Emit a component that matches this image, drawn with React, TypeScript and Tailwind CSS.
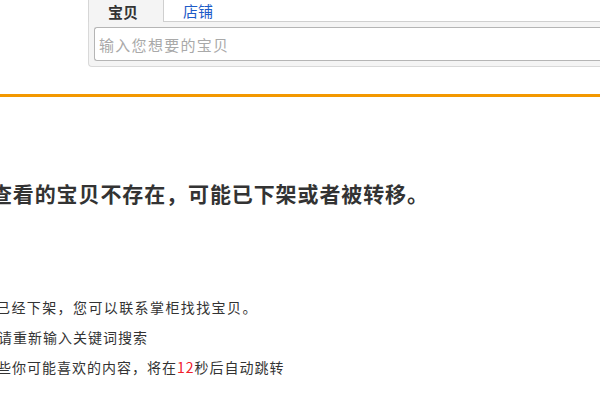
import React from "react";

const cjk = { fontFamily: '"Noto Sans CJK SC", "Noto Sans", sans-serif' };

export default function App() {
  return (
    <div className="w-[600px] h-[400px] overflow-hidden bg-white text-[#333]" style={cjk}>
      {/* search box */}
      <div className="ml-[88px] h-[67px] flex flex-col">
        <div className="flex h-[23px]">
          <div className="w-[75px] bg-[#f4f4f4] border-l border-[#d6d6d6] flex items-center pl-[19px]">
            <span className="text-[15px] font-bold leading-none text-[#333]">宝贝</span>
          </div>
          <div className="flex-1 bg-white border-l border-b border-[#cfcfcf] flex items-center pl-[19px]">
            <span className="text-[15px] leading-none text-[#1e5cc8]">店铺</span>
          </div>
        </div>
        <div className="flex-1 bg-[#f4f4f4] border-l border-b border-[#d9d9d9] rounded-bl-[4px] pl-[5px] pt-[5px] pb-[5px]">
          <div className="h-[34px] bg-white border border-[#b5b5b5] rounded-l-[3px] border-r-0 flex items-center pl-[4px]">
            <span className="text-[15px] text-[#a9a9a9] leading-none tracking-[1.3px]">输入您想要的宝贝</span>
          </div>
        </div>
      </div>

      {/* orange line */}
      <div className="mt-[27px] h-[3px] bg-[#f39800]" />

      {/* heading */}
      <div className="mt-[82px] whitespace-nowrap -ml-[31px] text-[21px] font-bold leading-[28px] tracking-[0.9px] text-[#333]">
        您查看的宝贝不存在，可能已下架或者被转移。
      </div>

      {/* lines */}
      <div className="mt-[85px] flex flex-col text-[14px] leading-[30px] tracking-[1px] whitespace-nowrap text-[#333]">
        <div className="-ml-[4px] tracking-[1.4px]">已经下架，您可以联系掌柜找找宝贝。</div>
        <div className="-ml-[2px]">请重新输入关键词搜索</div>
        <div className="-ml-[3px]">
          些你可能喜欢的内容，将在<span className="text-[#f0202a]">12</span>秒后自动跳转
        </div>
      </div>
    </div>
  );
}
